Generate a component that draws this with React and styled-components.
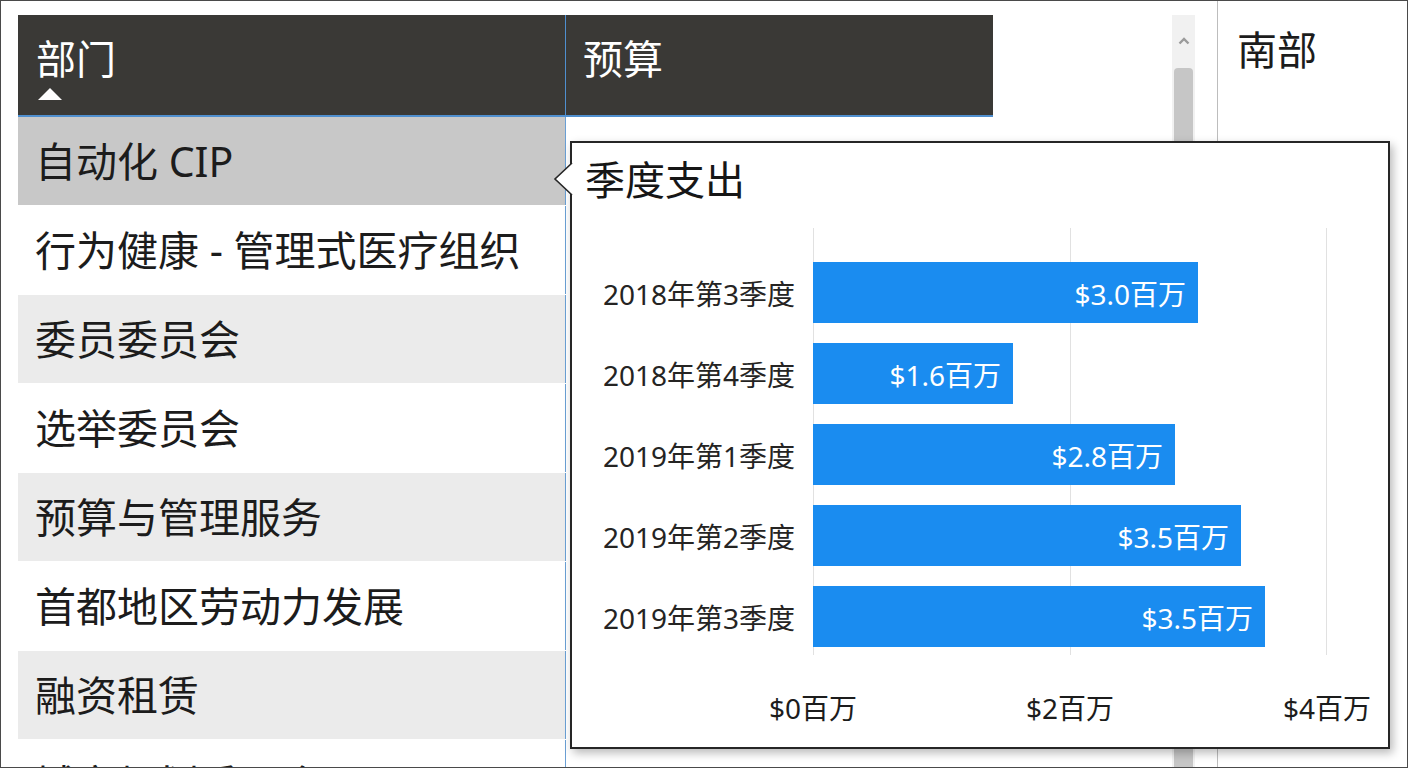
import React from 'react';
import styled, { createGlobalStyle } from 'styled-components';

const GlobalStyle = createGlobalStyle`
  html, body { margin: 0; padding: 0; background: #ffffff; }
  body { font-family: "Noto Sans", "Noto Sans CJK SC", sans-serif; color: #1f1f1f; }
  * { box-sizing: border-box; }
`;

const Frame = styled.div`
  position: relative;
  width: 1408px;
  height: 768px;
  border: 1px solid #4a4a4a;
  overflow: hidden;
  display: flex;
  background: #ffffff;
`;

const TableArea = styled.div`
  flex: 0 0 1216px;
  display: flex;
  padding: 14px 0 0 17px;
  overflow: hidden;
`;

const Table = styled.div`
  width: 975px;
  display: flex;
  flex-direction: column;
  flex: 0 0 auto;
`;

const HeaderRow = styled.div`
  display: grid;
  grid-template-columns: 548px 427px;
  height: 102px;
  flex: 0 0 auto;
  background: #3a3936;
  border-bottom: 2px solid #4f8fcf;
`;

const HeaderCell = styled.div`
  padding: 20px 0 0 ${p => p.$pad}px;
  color: #ffffff;
  font-size: 40px;
  line-height: 48px;
  border-right: ${p => (p.$divider ? '1px solid #4f8fcf' : 'none')};
  display: flex;
  flex-direction: column;
`;

const SortArrow = styled.span`
  display: block;
  width: 0;
  height: 0;
  margin: 5px 0 0 2px;
  border-left: 12px solid transparent;
  border-right: 12px solid transparent;
  border-bottom: 12px solid #ffffff;
`;

const Row = styled.div`
  display: grid;
  grid-template-columns: 548px 427px;
  height: 88px;
  margin-bottom: 1px;
  flex: 0 0 auto;
`;

const NameCell = styled.div`
  display: flex;
  align-items: center;
  padding-left: 17px;
  font-size: 41px;
  line-height: 48px;
  color: #1c1c1c;
  white-space: pre;
  background: ${p => (p.$selected ? '#c8c8c8' : p.$alt ? '#ebebeb' : '#ffffff')};
  border-right: 1px solid #6a9fd4;
`;

const BudgetCell = styled.div`
  display: flex;
  align-items: center;
  justify-content: flex-end;
  padding-right: 33px;
  font-size: 41px;
  line-height: 48px;
  color: #1c1c1c;
  background: #ffffff;
`;

const Scrollbar = styled.div`
  margin-left: 179px;
  width: 23px;
  flex: 0 0 23px;
  background: #f1f1f1;
  display: flex;
  flex-direction: column;
  align-items: center;
`;

const ScrollUp = styled.div`
  height: 53px;
  width: 100%;
  display: flex;
  justify-content: center;
  padding-top: 22px;
`;

const Thumb = styled.div`
  flex: 1;
  width: 19px;
  background: #c6c6c6;
  border-radius: 4px 4px 0 0;
`;

const VDivider = styled.div`
  flex: 0 0 1px;
  background: #bdbdbd;
`;

const RightPanel = styled.div`
  flex: 1;
  padding: 25px 0 0 19px;
  font-size: 40px;
  line-height: 48px;
  color: #1c1c1c;
`;

const Popup = styled.div`
  position: absolute;
  left: 569px;
  top: 140px;
  width: 820px;
  height: 608px;
  background: #ffffff;
  border: 2px solid #262626;
  box-shadow: 3px 4px 9px rgba(0, 0, 0, 0.28);
  padding: 13px 0 0 13px;
  display: flex;
  flex-direction: column;
`;

const PopupArrow = styled.svg`
  position: absolute;
  left: -19px;
  top: 20px;
  overflow: visible;
`;

const PopupTitle = styled.div`
  font-size: 40px;
  line-height: 48px;
  color: #161616;
`;

const Chart = styled.div`
  margin-top: 24px;
  display: flex;
  column-gap: 18px;
`;

const LabelCol = styled.div`
  width: 210px;
  padding-top: 34px;
  display: flex;
  flex-direction: column;
  gap: 20px;
`;

const CategoryLabel = styled.div`
  height: 61px;
  display: flex;
  align-items: center;
  justify-content: flex-end;
  font-size: 28px;
  color: #252423;
  white-space: nowrap;
`;

const PlotCol = styled.div`
  width: 514px;
  display: flex;
  flex-direction: column;
`;

const Plot = styled.div`
  height: 427px;
  padding-top: 34px;
  display: flex;
  flex-direction: column;
  gap: 20px;
  background:
    linear-gradient(#e1e1e1, #e1e1e1) 0 0 / 1px 100% no-repeat,
    linear-gradient(#e1e1e1, #e1e1e1) 50% 0 / 1px 100% no-repeat,
    linear-gradient(#e1e1e1, #e1e1e1) 100% 0 / 1px 100% no-repeat;
`;

const Bar = styled.div`
  height: 61px;
  background: #1a8cf0;
  display: flex;
  align-items: center;
  justify-content: flex-end;
  padding-right: 12px;
  color: #ffffff;
  font-size: 28px;
  white-space: nowrap;
`;

const AxisRow = styled.div`
  width: 604px;
  margin: 36px 0 0 -45px;
  display: flex;
  justify-content: space-between;
`;

const AxisLabel = styled.div`
  width: 90px;
  text-align: center;
  font-size: 28px;
  line-height: 34px;
  color: #1c1c1c;
  white-space: nowrap;
`;

const departments = [
  { name: '自动化 CIP', budget: '$9,837,153', selected: true },
  { name: '行为健康 - 管理式医疗组织' },
  { name: '委员委员会', alt: true },
  { name: '选举委员会' },
  { name: '预算与管理服务', alt: true },
  { name: '首都地区劳动力发展' },
  { name: '融资租赁', alt: true },
  { name: '城市规划委员会' },
];

const quarters = [
  { label: '2018年第3季度', value: '$3.0百万', px: 385 },
  { label: '2018年第4季度', value: '$1.6百万', px: 200 },
  { label: '2019年第1季度', value: '$2.8百万', px: 362 },
  { label: '2019年第2季度', value: '$3.5百万', px: 428 },
  { label: '2019年第3季度', value: '$3.5百万', px: 452 },
];

const PLOT_WIDTH = 514;

export default function App() {
  return (
    <>
      <GlobalStyle />
      <Frame>
        <TableArea>
          <Table>
            <HeaderRow>
              <HeaderCell $pad={18} $divider>
                部门
                <SortArrow />
              </HeaderCell>
              <HeaderCell $pad={17}>预算</HeaderCell>
            </HeaderRow>
            {departments.map(d => (
              <Row key={d.name}>
                <NameCell $selected={d.selected} $alt={d.alt}>{d.name}</NameCell>
                <BudgetCell>{d.budget || ''}</BudgetCell>
              </Row>
            ))}
          </Table>
          <Scrollbar>
            <ScrollUp>
              <svg width="12" height="8" viewBox="0 0 12 8">
                <polyline points="1.5,6.5 6,2 10.5,6.5" fill="none" stroke="#9b9b9b" strokeWidth="2.4" />
              </svg>
            </ScrollUp>
            <Thumb />
          </Scrollbar>
        </TableArea>
        <VDivider />
        <RightPanel>南部</RightPanel>

        <Popup>
          <PopupArrow width="21" height="32" viewBox="0 0 21 32">
            <polygon points="19,0 2,16 19,32 21,32 21,0" fill="#ffffff" />
            <polyline points="19,0 2,16 19,32" fill="none" stroke="#262626" strokeWidth="1.6" />
          </PopupArrow>
          <PopupTitle>季度支出</PopupTitle>
          <Chart>
            <LabelCol>
              {quarters.map(q => (
                <CategoryLabel key={q.label}>{q.label}</CategoryLabel>
              ))}
            </LabelCol>
            <PlotCol>
              <Plot>
                {quarters.map(q => (
                  <Bar key={q.label} style={{ width: `${(q.px / PLOT_WIDTH) * 100}%` }}>
                    {q.value}
                  </Bar>
                ))}
              </Plot>
              <AxisRow>
                <AxisLabel>$0百万</AxisLabel>
                <AxisLabel>$2百万</AxisLabel>
                <AxisLabel>$4百万</AxisLabel>
              </AxisRow>
            </PlotCol>
          </Chart>
        </Popup>
      </Frame>
    </>
  );
}
